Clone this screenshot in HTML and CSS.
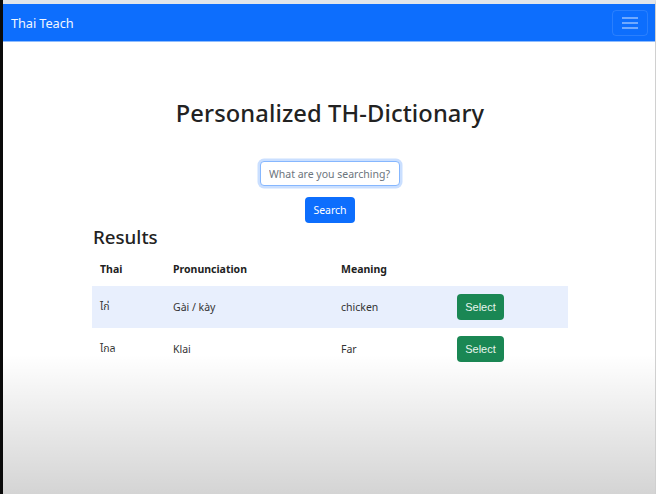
FILE: index.html
```html
<!DOCTYPE html>
<html lang="en">
<head>
<meta charset="utf-8">
<title>Thai Teach</title>
<link rel="stylesheet" href="styles.css">
</head>
<body>
<div class="frame">
  <div class="edge"></div>
  <div class="screen">
    <nav class="navbar">
      <span class="brand">Thai Teach</span>
      <button class="toggler" aria-label="Menu">
        <svg width="18" height="14" viewBox="0 0 18 14"><path d="M1 2h16M1 7h16M1 12h16" stroke="rgba(255,255,255,0.55)" stroke-width="1.6" fill="none"/></svg>
      </button>
    </nav>
    <main class="container">
      <h1 class="title">Personalized TH-Dictionary</h1>
      <form class="search">
        <input class="search-input" type="text" placeholder="What are you searching?">
        <button class="btn btn-primary" type="button">Search</button>
      </form>
      <h2 class="results">Results</h2>
      <table class="table">
        <thead>
          <tr><th class="c1">Thai</th><th class="c2">Pronunciation</th><th class="c3">Meaning</th><th class="c4"></th></tr>
        </thead>
        <tbody>
          <tr class="active"><td class="thai">ไก่</td><td>Gài / kày</td><td>chicken</td><td><button class="btn btn-success" type="button">Select</button></td></tr>
          <tr><td class="thai">ไกล</td><td>Klai</td><td>Far</td><td><button class="btn btn-success" type="button">Select</button></td></tr>
        </tbody>
      </table>
    </main>
    <div class="shade"></div>
  </div>
</div>
</body>
</html>
```
FILE: styles.css
```css
html, body { margin: 0; padding: 0; height: 100%; }
body { background: #000; font-family: "Noto Sans", "Open Sans", sans-serif; color: #212529; }
.frame { display: flex; height: 494px; overflow: hidden; }
.edge { width: 3px; background: #0a0a0a; flex: none; }
.screen { position: relative; flex: 1; background: #fff; border-top: 4px solid #e1e5ea; border-right: 1px solid #d0d0d0; overflow: hidden; }
.navbar { height: 37px; background: #0d6efd; border-bottom: 1px solid #8fbcfd; display: flex; align-items: center; justify-content: space-between; padding: 0 7px 0 8px; }
.brand { color: #f2f6ff; font-size: 12.8px; letter-spacing: -0.1px; }
.toggler { width: 36px; height: 26px; border: 1px solid rgba(255,255,255,0.12); border-radius: 4px; background: transparent; display: flex; align-items: center; justify-content: center; padding: 0; }
.container { width: 476px; margin: 0 0 0 89px; padding-top: 0; }
.title { margin: 54px 0 0; text-align: center; font-size: 23.7px; font-weight: 500; color: #222; letter-spacing: 0.1px; line-height: 34px; }
.search { display: flex; flex-direction: column; align-items: center; gap: 11px; margin-top: 31px; }
.search-input { width: 140px; height: 25px; box-sizing: border-box; border: 1px solid #86b7fe; box-shadow: 0 0 0 2.5px rgba(13,110,253,0.22); border-radius: 4px; padding: 0 8px; font-family: inherit; font-size: 10.5px; outline: none; }
.search-input::placeholder { color: #6c757d; }
.btn { border: none; border-radius: 4px; color: #fff; font-family: inherit; font-size: 10.5px; padding: 0; cursor: pointer; }
.btn-primary { background: #0d6efd; width: 50px; height: 26px; }
.btn-success { background: #1a8754; width: 47px; height: 26px; font-family: "Liberation Sans Narrow", "Liberation Sans", sans-serif; font-size: 11px; color: #e8f5ee; }
.results { margin: 1px 0 0 1px; font-size: 18.7px; font-weight: 500; line-height: 26px; color: #222; }
.table { width: 476px; border-collapse: collapse; margin-top: 2px; font-size: 10.5px; }
.table th { text-align: left; font-weight: 700; height: 34px; padding: 0 8px; color: #222; }
.table td { height: 42px; padding: 0 8px; color: #333; }
.table tr.active td { background: #e8effd; }
.c1 { width: 57px; }
.c2 { width: 152px; }
.c3 { width: 100px; }
.thai { font-family: "Noto Sans Thai", "Noto Sans", "DejaVu Sans", sans-serif; }
.shade { position: absolute; left: 0; right: 0; top: 350px; bottom: 0; background: linear-gradient(to bottom, rgba(0,0,0,0), rgba(0,0,0,0.17)); pointer-events: none; }
```
